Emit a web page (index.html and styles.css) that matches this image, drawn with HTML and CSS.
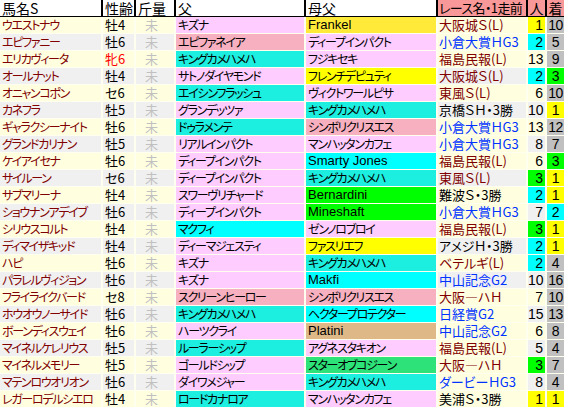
FILE: index.html
```html
<!DOCTYPE html>
<html lang="ja">
<head>
<meta charset="utf-8">
<link rel="stylesheet" href="styles.css">
</head>
<body>
<div class="tbl">
  <div class="row head">
    <div class="h">馬名S</div><div class="h">性齢</div><div class="h">斤量</div><div class="h">父</div><div class="h">母父</div><div class="h hr hrace">レース名・1走前</div><div class="h hr hc">人</div><div class="h hr hc">着</div>
  </div>
  <div class="row odd"><div class="nm">ウエストナウ</div><div class="sa">牡4</div><div class="kg">未</div><div class="s p">キズナ</div><div class="s gd lat">Frankel</div><div class="rc red">大阪城Ｓ(L)</div><div class="pop y">1</div><div class="fin gy">10</div></div>
  <div class="row even"><div class="nm">エピファニー</div><div class="sa">牡6</div><div class="kg">未</div><div class="s r">エピファネイア</div><div class="s p">ディープインパクト</div><div class="rc blue lt">小倉大賞ＨG3</div><div class="pop c">2</div><div class="fin gy">5</div></div>
  <div class="row odd"><div class="nm">エリカヴィータ</div><div class="sa f">牝6</div><div class="kg">未</div><div class="s t">キングカメハメハ</div><div class="s p">フジキセキ</div><div class="rc red">福島民報(L)</div><div class="pop">13</div><div class="fin gy">9</div></div>
  <div class="row even"><div class="nm">オールナット</div><div class="sa">牡4</div><div class="kg">未</div><div class="s p">サトノダイヤモンド</div><div class="s y">フレンチデピュティ</div><div class="rc red">大阪城Ｓ(L)</div><div class="pop c">2</div><div class="fin g">3</div></div>
  <div class="row odd"><div class="nm">オニャンコポン</div><div class="sa">セ6</div><div class="kg">未</div><div class="s t">エイシンフラッシュ</div><div class="s p">ヴィクトワールピサ</div><div class="rc red">東風Ｓ(L)</div><div class="pop">6</div><div class="fin gy">10</div></div>
  <div class="row even"><div class="nm">カネフラ</div><div class="sa">牡5</div><div class="kg">未</div><div class="s p">グランデッツァ</div><div class="s t">キングカメハメハ</div><div class="rc">京橋ＳＨ・3勝</div><div class="pop">10</div><div class="fin y">1</div></div>
  <div class="row odd"><div class="nm">ギャラクシーナイト</div><div class="sa">牡6</div><div class="kg">未</div><div class="s t">ドゥラメンテ</div><div class="s r">シンボリクリスエス</div><div class="rc blue">小倉大賞ＨG3</div><div class="pop">13</div><div class="fin gy">12</div></div>
  <div class="row even"><div class="nm">グランドカリナン</div><div class="sa">牡5</div><div class="kg">未</div><div class="s p">リアルインパクト</div><div class="s p">マンハッタンカフェ</div><div class="rc blue lt">小倉大賞ＨG3</div><div class="pop">8</div><div class="fin gy">7</div></div>
  <div class="row odd"><div class="nm">ケイアイセナ</div><div class="sa">牡6</div><div class="kg">未</div><div class="s p">ディープインパクト</div><div class="s c lat">Smarty Jones</div><div class="rc red">福島民報(L)</div><div class="pop">6</div><div class="fin g">3</div></div>
  <div class="row even"><div class="nm">サイルーン</div><div class="sa">セ6</div><div class="kg">未</div><div class="s p">ディープインパクト</div><div class="s t">キングカメハメハ</div><div class="rc red">東風Ｓ(L)</div><div class="pop g">3</div><div class="fin y">1</div></div>
  <div class="row odd"><div class="nm">サブマリーナ</div><div class="sa">牡4</div><div class="kg">未</div><div class="s p">スワーヴリチャード</div><div class="s gr lat">Bernardini</div><div class="rc">難波Ｓ・3勝</div><div class="pop c">2</div><div class="fin y">1</div></div>
  <div class="row even"><div class="nm">ショウナンアデイブ</div><div class="sa">牡6</div><div class="kg">未</div><div class="s p">ディープインパクト</div><div class="s gr lat">Mineshaft</div><div class="rc blue lt">小倉大賞ＨG3</div><div class="pop">7</div><div class="fin c">2</div></div>
  <div class="row odd"><div class="nm">シリウスコルト</div><div class="sa">牡4</div><div class="kg">未</div><div class="s c">マクフィ</div><div class="s p">ゼンノロブロイ</div><div class="rc red">福島民報(L)</div><div class="pop g">3</div><div class="fin y">1</div></div>
  <div class="row even"><div class="nm">ディマイザキッド</div><div class="sa">牡4</div><div class="kg">未</div><div class="s p">ディーマジェスティ</div><div class="s y">ファスリエフ</div><div class="rc">アメジＨ・3勝</div><div class="pop c">2</div><div class="fin y">1</div></div>
  <div class="row odd"><div class="nm">ハピ</div><div class="sa">牡6</div><div class="kg">未</div><div class="s p">キズナ</div><div class="s t">キングカメハメハ</div><div class="rc red">ベテルギ(L)</div><div class="pop c">2</div><div class="fin gy">4</div></div>
  <div class="row even"><div class="nm">パラレルヴィジョン</div><div class="sa">牡6</div><div class="kg">未</div><div class="s p">キズナ</div><div class="s c lat">Makfi</div><div class="rc blue">中山記念G2</div><div class="pop">10</div><div class="fin gy">16</div></div>
  <div class="row odd"><div class="nm">フライライクバード</div><div class="sa">セ8</div><div class="kg">未</div><div class="s r">スクリーンヒーロー</div><div class="s r">シンボリクリスエス</div><div class="rc red">大阪―ハＨ</div><div class="pop">7</div><div class="fin gy">10</div></div>
  <div class="row even"><div class="nm">ホウオウノーサイド</div><div class="sa">牡6</div><div class="kg">未</div><div class="s t">キングカメハメハ</div><div class="s c">ヘクタープロテクター</div><div class="rc blue lt">日経賞G2</div><div class="pop">15</div><div class="fin gy">13</div></div>
  <div class="row odd"><div class="nm">ボーンディスウェイ</div><div class="sa">牡6</div><div class="kg">未</div><div class="s p">ハーツクライ</div><div class="s tan lat">Platini</div><div class="rc blue">中山記念G2</div><div class="pop">6</div><div class="fin gy">8</div></div>
  <div class="row even"><div class="nm">マイネルケレリウス</div><div class="sa">牡5</div><div class="kg">未</div><div class="s t">ルーラーシップ</div><div class="s p">アグネスタキオン</div><div class="rc red lt">福島民報(L)</div><div class="pop">5</div><div class="fin gy">4</div></div>
  <div class="row odd"><div class="nm">マイネルメモリー</div><div class="sa">牡5</div><div class="kg">未</div><div class="s p">ゴールドシップ</div><div class="s m">スターオブコジーン</div><div class="rc red">大阪―ハＨ</div><div class="pop g">3</div><div class="fin gy">7</div></div>
  <div class="row even"><div class="nm">マテンロウオリオン</div><div class="sa">牡6</div><div class="kg">未</div><div class="s p">ダイワメジャー</div><div class="s t">キングカメハメハ</div><div class="rc blue lt">ダービーＨG3</div><div class="pop">8</div><div class="fin gy">4</div></div>
  <div class="row odd"><div class="nm">レガーロデルシエロ</div><div class="sa">牡4</div><div class="kg">未</div><div class="s t">ロードカナロア</div><div class="s p">マンハッタンカフェ</div><div class="rc">美浦Ｓ・3勝</div><div class="pop y">1</div><div class="fin y">1</div></div>
</div>
</body>
</html>
```

FILE: styles.css
```css
html, body {
  margin: 0;
  padding: 0;
  background: #ffffff;
}
body {
  font-family: "Noto Sans CJK JP", "Liberation Sans", sans-serif;
  font-size: 13px;
  color: #000;
}
.tbl {
  width: 564px;
  background: #fffff0;
}
.row {
  display: grid;
  grid-template-columns: 101px 31px 38px 128px 130px 88px 17px 17px;
  column-gap: 2px;
  height: 16px;
  line-height: 16px;
  border-bottom: 1px solid #fffff0;
  white-space: nowrap;
}
.row > div {
  font-feature-settings: "palt";
}
.head {
  background: #fff;
  border-bottom: 1px solid #000;
  font-size: 14px;
}
.h {
  padding-left: 2px;
  box-shadow: -2px 0 0 #000;
}
.h:first-child { box-shadow: none; }
.hr { background: #f89898; }
.hrace { font-size: 13px; letter-spacing: -0.6px; padding-left: 1px; }
.hc { text-align: center; padding-left: 0; }

.odd > div { background: #ffffe0; }
.even > div { background: #f0f0f0; }
.even > .rc.lt { background: #ffffe0; }

.nm, .s {
  font-size: 12px;
  letter-spacing: -1.3px;
}
.s.lat {
  font-family: "Liberation Sans", sans-serif;
  font-size: 13px;
  letter-spacing: 0;
}
.nm { color: #800000; padding-left: 2px; }
.sa { padding-left: 2px; }
.sa.f { color: #ff0000; }
.kg { color: #c0c0c0; padding-left: 9px; }
.s { padding-left: 2px; }
.rc { padding-left: 1px; font-size: 13px; }
.rc.red { color: #800000; }
.rc.blue { color: #0033ff; }
.pop { text-align: right; padding-right: 2px; font-family: "Liberation Sans", sans-serif; font-size: 14px; }
.fin { text-align: center; font-family: "Liberation Sans", sans-serif; font-size: 14px; letter-spacing: -0.5px; }

.row > .p { background: #ffccff; }
.row > .r { background: #f6b0c0; }
.row > .t { background: #1cefdf; }
.row > .c { background: #00ffff; }
.row > .y { background: #ffff00; }
.row > .gd { background: #ffea3a; }
.row > .gr { background: #00ff00; }
.row > .g { background: #00ff00; }
.row > .m { background: #2ee27a; }
.row > .tan { background: #deb887; }
.row > .gy { background: #c0c0c0; }
```
